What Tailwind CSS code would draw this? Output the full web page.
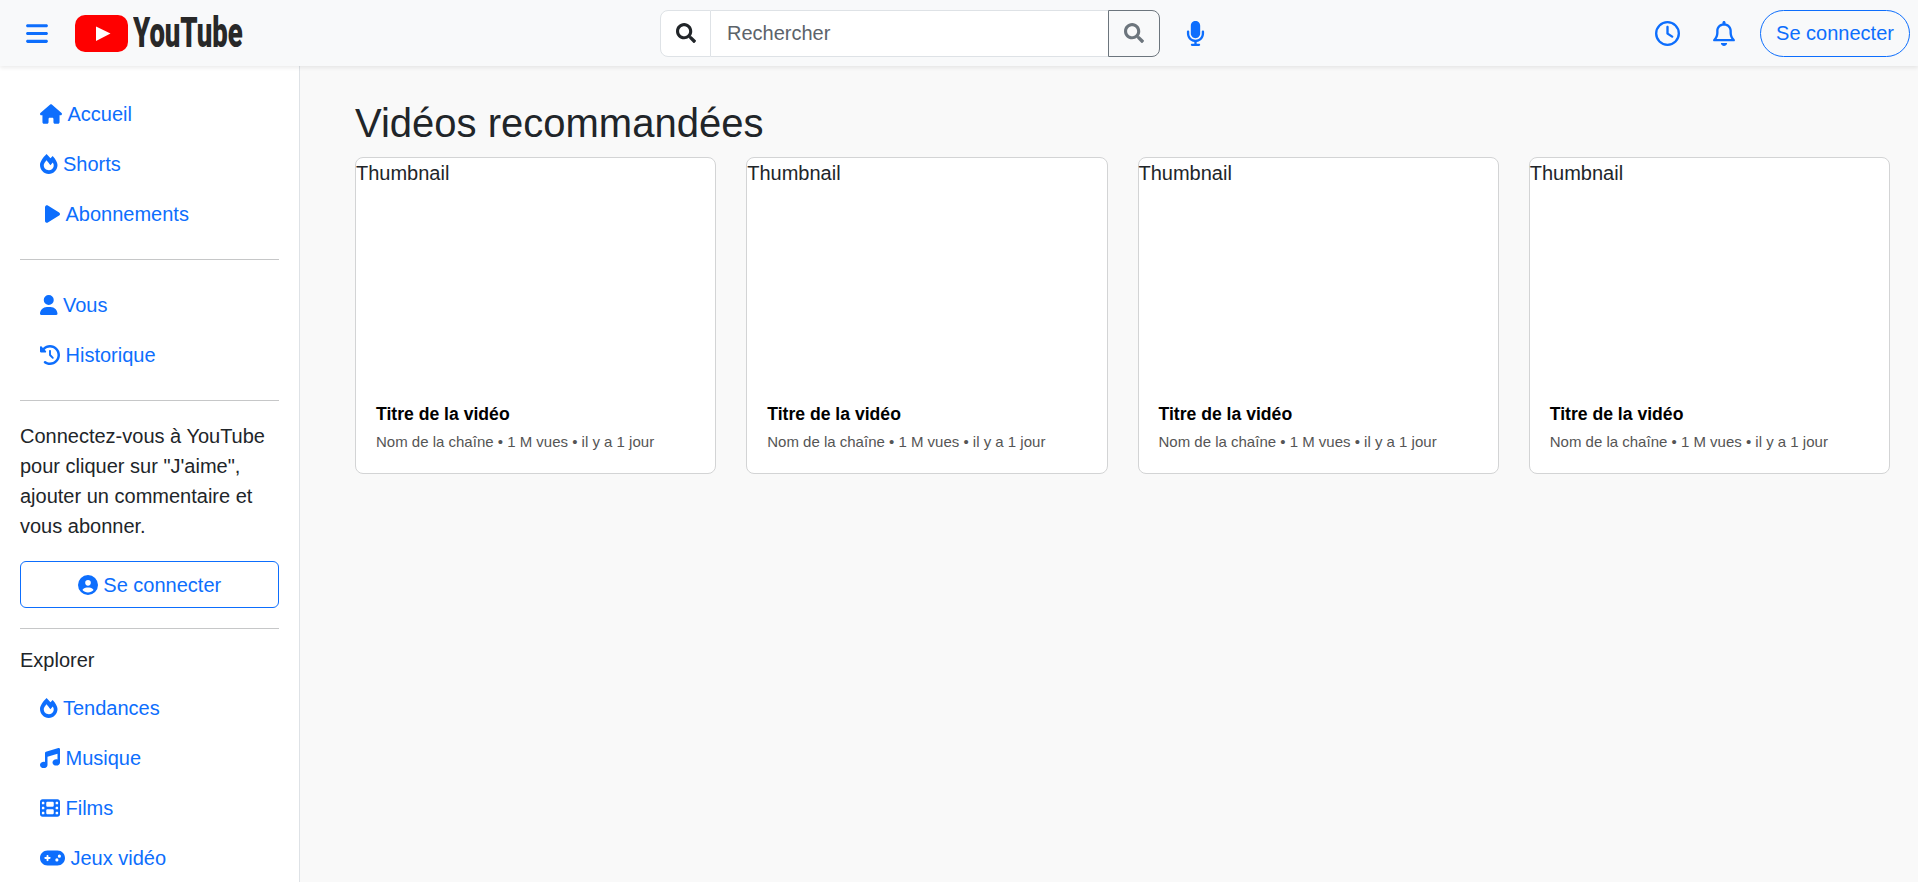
<!doctype html>
<html lang="fr">
<head>
<meta charset="utf-8">
<title>YouTube</title>
<script src="https://cdn.jsdelivr.net/npm/@tailwindcss/browser@4"></script>
</head>
<body class="h-screen overflow-hidden bg-[#f9f9f9] font-['Liberation_Sans',Arial,sans-serif] text-[20px] leading-[30px] text-[#212529]">
<header class="relative z-10 flex h-[66px] items-center bg-[#f8f9fa] shadow-[0_2px_4px_rgba(0,0,0,0.08)]">
  <div class="flex w-[660px] shrink-0 items-center pl-[26px]">
    <svg class="h-[25px] w-[22px] fill-[#0d6efd]" viewBox="0 0 448 512"><path d="M0 96C0 78.3 14.3 64 32 64H416c17.7 0 32 14.3 32 32s-14.3 32-32 32H32C14.3 128 0 113.7 0 96zM0 256c0-17.7 14.3-32 32-32H416c17.7 0 32 14.3 32 32s-14.3 32-32 32H32c-17.7 0-32-14.3-32-32zM448 416c0 17.7-14.3 32-32 32H32c-17.7 0-32-14.3-32-32s14.3-32 32-32H416c17.7 0 32 14.3 32 32z"/></svg>
    <svg class="ml-[27px] h-[37px] w-[53px]" viewBox="0 0 53 37"><rect width="53" height="37" rx="10" fill="#ff0000"/><path d="M21 11.5 L35.5 18.5 L21 26 Z" fill="#fff"/></svg>
    <svg class="ml-[5px] h-[50px] w-[115px]" viewBox="0 0 180 50" preserveAspectRatio="none"><text x="0" y="39.5" font-family="Roboto" font-weight="900" font-size="43" fill="#282828">YouTube</text></svg>
  </div>
  <div class="flex h-[47px] w-[500px] shrink-0">
    <div class="flex w-[51px] items-center justify-center rounded-l-[8px] border border-[#dee2e6] bg-white">
      <svg class="h-5 w-5 fill-[#212529]" viewBox="0 0 512 512"><path d="M505 442.7L405.3 343c-4.5-4.5-10.6-7-17-7H372c27.6-35.3 44-79.7 44-128C416 93.1 322.9 0 208 0S0 93.1 0 208s93.1 208 208 208c48.3 0 92.7-16.4 128-44v16.3c0 6.4 2.5 12.5 7 17l99.7 99.7c9.4 9.4 24.6 9.4 33.9 0l28.3-28.3c9.4-9.4 9.4-24.6.1-34zM208 336c-70.7 0-128-57.2-128-128 0-70.7 57.2-128 128-128 70.7 0 128 57.2 128 128 0 70.7-57.2 128-128 128z"/></svg>
    </div>
    <div class="flex flex-1 items-center border-y border-[#dee2e6] bg-white pl-[16px] text-[#5c636a]">Rechercher</div>
    <div class="flex w-[52px] items-center justify-center rounded-r-[8px] border border-[#6c757d] bg-[#f8f9fa]">
      <svg class="h-5 w-5 fill-[#6c757d]" viewBox="0 0 512 512"><path d="M505 442.7L405.3 343c-4.5-4.5-10.6-7-17-7H372c27.6-35.3 44-79.7 44-128C416 93.1 322.9 0 208 0S0 93.1 0 208s93.1 208 208 208c48.3 0 92.7-16.4 128-44v16.3c0 6.4 2.5 12.5 7 17l99.7 99.7c9.4 9.4 24.6 9.4 33.9 0l28.3-28.3c9.4-9.4 9.4-24.6.1-34zM208 336c-70.7 0-128-57.2-128-128 0-70.7 57.2-128 128-128 70.7 0 128 57.2 128 128 0 70.7-57.2 128-128 128z"/></svg>
    </div>
  </div>
  <svg class="ml-[26px] h-[25px] w-[19px] fill-[#0d6efd]" viewBox="0 0 384 512"><path d="M192 0C139 0 96 43 96 96V256c0 53 43 96 96 96s96-43 96-96V96c0-53-43-96-96-96zM64 216c0-13.3-10.7-24-24-24s-24 10.7-24 24v40c0 89.1 66.2 162.7 152 174.4V464H120c-13.3 0-24 10.7-24 24s10.7 24 24 24h72 72c13.3 0 24-10.7 24-24s-10.7-24-24-24H216V430.4c85.8-11.7 152-85.3 152-174.4V216c0-13.3-10.7-24-24-24s-24 10.7-24 24v40c0 70.7-57.3 128-128 128s-128-57.3-128-128V216z"/></svg>
  <div class="ml-auto flex items-center pr-2">
    <svg class="h-[25px] w-[25px] fill-[#0d6efd]" viewBox="0 0 512 512"><path d="M464 256A208 208 0 1 1 48 256a208 208 0 1 1 416 0zM0 256a256 256 0 1 0 512 0A256 256 0 1 0 0 256zM232 120V256c0 8 4 15.5 10.7 20l96 64c11 7.4 25.9 4.4 33.3-6.7s4.4-25.9-6.7-33.3L280 243.2V120c0-13.3-10.7-24-24-24s-24 10.7-24 24z"/></svg>
    <svg class="ml-[33px] h-[25px] w-[22px] fill-[#0d6efd]" viewBox="0 0 448 512"><path d="M224 0c-17.7 0-32 14.3-32 32V49.9C119.5 61.4 64 124.2 64 200v33.4c0 45.4-15.5 89.5-43.8 124.9L5.3 377c-5.8 7.2-6.9 17.1-2.9 25.4S14.8 416 24 416H424c9.2 0 17.6-5.3 21.6-13.6s2.9-18.2-2.9-25.4l-14.9-18.6C399.5 322.9 384 278.8 384 233.4V200c0-75.8-55.5-138.6-128-150.1V32c0-17.7-14.3-32-32-32zm0 96h8c57.4 0 104 46.6 104 104v33.4c0 47.9 13.9 94.6 39.7 134.6H72.3C98.1 328 112 281.3 112 233.4V200c0-57.4 46.6-104 104-104h8zm64 352H224 160c0 17 6.7 33.3 18.7 45.3s28.3 18.7 45.3 18.7s33.3-6.7 45.3-18.7s18.7-28.3 18.7-45.3z"/></svg>
    <div class="ml-[25px] flex h-[47px] w-[150px] items-center justify-center rounded-full border border-[#0d6efd] text-[#0d6efd]">Se connecter</div>
  </div>
</header>
<div class="flex h-[816px]">
  <aside class="h-full w-[300px] shrink-0 overflow-hidden border-r border-[#dee2e6] bg-white px-5 pt-[23px]">
    <nav class="flex flex-col text-[#0d6efd]">
      <a class="flex h-[50px] items-center gap-[5.5px] pl-5"><svg class="h-5 w-[22px] fill-current" viewBox="0 0 576 512"><path d="M575.8 255.5c0 18-15 32.1-32 32.1h-32l.7 160.2c0 2.7-.2 5.4-.5 8.1V472c0 22.1-17.9 40-40 40H456c-1.1 0-2.2 0-3.3-.1c-1.4 .1-2.8 .1-4.2 .1H416 392c-22.1 0-40-17.9-40-40V448 384c0-17.7-14.3-32-32-32H256c-17.7 0-32 14.3-32 32v64 24c0 22.1-17.9 40-40 40H160 128.1c-1.5 0-3-.1-4.5-.2c-1.2 .1-2.4 .2-3.6 .2H104c-22.1 0-40-17.9-40-40V360c0-.9 0-1.9 .1-2.8V287.6H32c-18 0-32-14-32-32.1c0-9 3-17 10-24L266.4 8c7-7 15-8 22-8s15 2 21 7L564.8 231.5c8 7 12 15 11 24z"/></svg>Accueil</a>
      <a class="flex h-[50px] items-center gap-[5.5px] pl-5"><svg class="h-5 w-[17.5px] fill-current" viewBox="0 0 448 512"><path d="M323.56 51.2c-20.8 19.3-39.58 39.59-56.22 59.97C240.08 73.62 206.28 35.53 168 0 69.74 91.17 0 209.96 0 281.6 0 408.85 100.29 512 224 512s224-103.15 224-230.4c0-53.27-51.98-163.14-124.44-230.4zm-19.47 340.65C282.43 407.01 255.72 416 226.86 416 154.71 416 96 368.26 96 290.75c0-38.61 24.31-72.63 72.79-130.75 6.93 7.98 98.83 125.34 98.83 125.34l58.63-66.88c4.14 6.85 7.91 13.55 11.27 19.97 27.35 52.19 15.81 118.97-33.43 153.42z"/></svg>Shorts</a>
      <a class="flex h-[50px] items-center gap-[5.5px] pl-[25px]"><svg class="h-5 w-[15px] fill-current" viewBox="0 0 384 512"><path d="M73 39c-14.8-9.1-33.4-9.4-48.5-.9S0 62.6 0 80V432c0 17.4 9.4 33.4 24.5 41.9s33.7 8.1 48.5-.9L361 297c14.3-8.7 23-24.2 23-41s-8.7-32.2-23-41L73 39z"/></svg>Abonnements</a>
    </nav>
    <div class="my-5 h-px bg-[#c6c7c8]"></div>
    <nav class="flex flex-col text-[#0d6efd]">
      <a class="flex h-[50px] items-center gap-[5.5px] pl-5"><svg class="h-5 w-[17.5px] fill-current" viewBox="0 0 448 512"><path d="M224 256A128 128 0 1 0 224 0a128 128 0 1 0 0 256zm-45.7 48C79.8 304 0 383.8 0 482.3C0 498.7 13.3 512 29.7 512H418.3c16.4 0 29.7-13.3 29.7-29.7C448 383.8 368.2 304 269.7 304H178.3z"/></svg>Vous</a>
      <a class="flex h-[50px] items-center gap-[5.5px] pl-5"><svg class="h-5 w-5 fill-current" viewBox="0 0 512 512"><path d="M75 75L41 41C25.9 25.9 0 36.6 0 57.9V168c0 13.3 10.7 24 24 24H134.1c21.4 0 32.1-25.9 17-41l-30.8-30.8C155 85.5 203 64 256 64c106 0 192 86 192 192s-86 192-192 192c-40.8 0-78.6-12.7-109.7-34.4c-14.5-10.1-34.4-6.6-44.6 7.9s-6.6 34.4 7.9 44.6C151.2 495 201.7 512 256 512c141.4 0 256-114.6 256-256S397.4 0 256 0C185.3 0 121.3 28.7 75 75zm181 53c-13.3 0-24 10.7-24 24V256c0 6.4 2.5 12.5 7 17l72 72c9.4 9.4 24.6 9.4 33.9 0s9.4-24.6 0-33.9l-65-65V152c0-13.3-10.7-24-24-24z"/></svg>Historique</a>
    </nav>
    <div class="my-5 h-px bg-[#c6c7c8]"></div>
    <p>Connectez-vous à YouTube pour cliquer sur "J'aime", ajouter un commentaire et vous abonner.</p>
    <div class="mt-5 flex h-[47px] items-center justify-center gap-[5.5px] rounded-[6px] border border-[#0d6efd] text-[#0d6efd]"><svg class="h-5 w-5 fill-current" viewBox="0 0 512 512"><path d="M399 384.2C376.9 345.8 335.4 320 288 320H224c-47.4 0-88.9 25.8-111 64.2c35.2 39.2 86.2 63.8 143 63.8s107.8-24.7 143-63.8zM0 256a256 256 0 1 1 512 0A256 256 0 1 1 0 256zm256 16a72 72 0 1 0 0-144 72 72 0 1 0 0 144z"/></svg>Se connecter</div>
    <div class="mt-5 mb-4 h-px bg-[#c6c7c8]"></div>
    <p class="mb-2">Explorer</p>
    <nav class="flex flex-col text-[#0d6efd]">
      <a class="flex h-[50px] items-center gap-[5.5px] pl-5"><svg class="h-5 w-[17.5px] fill-current" viewBox="0 0 448 512"><path d="M323.56 51.2c-20.8 19.3-39.58 39.59-56.22 59.97C240.08 73.62 206.28 35.53 168 0 69.74 91.17 0 209.96 0 281.6 0 408.85 100.29 512 224 512s224-103.15 224-230.4c0-53.27-51.98-163.14-124.44-230.4zm-19.47 340.65C282.43 407.01 255.72 416 226.86 416 154.71 416 96 368.26 96 290.75c0-38.61 24.31-72.63 72.79-130.75 6.93 7.98 98.83 125.34 98.83 125.34l58.63-66.88c4.14 6.85 7.91 13.55 11.27 19.97 27.35 52.19 15.81 118.97-33.43 153.42z"/></svg>Tendances</a>
      <a class="flex h-[50px] items-center gap-[5.5px] pl-5"><svg class="h-5 w-5 fill-current" viewBox="0 0 512 512"><path d="M499.1 6.3c8.1 6 12.9 15.6 12.9 25.7v72V368c0 44.2-43 80-96 80s-96-35.8-96-80s43-80 96-80c11.2 0 22 1.6 32 4.6V147L192 223.8V432c0 44.2-43 80-96 80s-96-35.8-96-80s43-80 96-80c11.2 0 22 1.6 32 4.6V200 128c0-14.1 9.3-26.6 22.8-30.7l320-96c9.7-2.9 20.2-1.1 28.3 4.9z"/></svg>Musique</a>
      <a class="flex h-[50px] items-center gap-[5.5px] pl-5"><svg class="h-5 w-5 fill-current" viewBox="0 0 512 512"><path d="M0 96C0 60.7 28.7 32 64 32H448c35.3 0 64 28.7 64 64V416c0 35.3-28.7 64-64 64H64c-35.3 0-64-28.7-64-64V96zM48 368v32c0 8.8 7.2 16 16 16H96c8.8 0 16-7.2 16-16V368c0-8.8-7.2-16-16-16H64c-8.8 0-16 7.2-16 16zm368-16c-8.8 0-16 7.2-16 16v32c0 8.8 7.2 16 16 16h32c8.8 0 16-7.2 16-16V368c0-8.8-7.2-16-16-16H416zM48 240v32c0 8.8 7.2 16 16 16H96c8.8 0 16-7.2 16-16V240c0-8.8-7.2-16-16-16H64c-8.8 0-16 7.2-16 16zm368-16c-8.8 0-16 7.2-16 16v32c0 8.8 7.2 16 16 16h32c8.8 0 16-7.2 16-16V240c0-8.8-7.2-16-16-16H416zM48 112v32c0 8.8 7.2 16 16 16H96c8.8 0 16-7.2 16-16V112c0-8.8-7.2-16-16-16H64c-8.8 0-16 7.2-16 16zM416 96c-8.8 0-16 7.2-16 16v32c0 8.8 7.2 16 16 16h32c8.8 0 16-7.2 16-16V112c0-8.8-7.2-16-16-16H416zM160 128v64c0 17.7 14.3 32 32 32H320c17.7 0 32-14.3 32-32V128c0-17.7-14.3-32-32-32H192c-17.7 0-32 14.3-32 32zm32 160c-17.7 0-32 14.3-32 32v64c0 17.7 14.3 32 32 32H320c17.7 0 32-14.3 32-32V320c0-17.7-14.3-32-32-32H192z"/></svg>Films</a>
      <a class="flex h-[50px] items-center gap-[5.5px] pl-5"><svg class="h-5 w-[25px] fill-current" viewBox="0 0 640 512"><path d="M192 64C86 64 0 150 0 256S86 448 192 448H448c106 0 192-86 192-192s-86-192-192-192H192zM496 168a40 40 0 1 1 0 80 40 40 0 1 1 0-80zM392 304a40 40 0 1 1 80 0 40 40 0 1 1 -80 0zM168 200c0-13.3 10.7-24 24-24s24 10.7 24 24v32h32c13.3 0 24 10.7 24 24s-10.7 24-24 24H216v32c0 13.3-10.7 24-24 24s-24-10.7-24-24V280H136c-13.3 0-24-10.7-24-24s10.7-24 24-24h32V200z"/></svg>Jeux vidéo</a>
    </nav>
  </aside>
  <main class="flex-1 pl-[55px] pr-[28px] pt-[33px]">
    <h2 class="mb-[10px] text-[40px] leading-[48px]">Vidéos recommandées</h2>
    <div class="grid grid-cols-4 gap-[30px]">
      <article class="h-[317px] rounded-[8px] border border-[#d3d4d5] bg-white">
        <div class="h-[200px] leading-[30px]">Thumbnail</div>
        <div class="px-[20px] pt-[43px]"><h3 class="text-[17.6px] leading-[26px] font-bold text-black">Titre de la vidéo</h3><p class="mt-[4px] text-[15px] leading-[22px] text-[#555]">Nom de la chaîne • 1 M vues • il y a 1 jour</p></div>
      </article>
      <article class="h-[317px] rounded-[8px] border border-[#d3d4d5] bg-white">
        <div class="h-[200px] leading-[30px]">Thumbnail</div>
        <div class="px-[20px] pt-[43px]"><h3 class="text-[17.6px] leading-[26px] font-bold text-black">Titre de la vidéo</h3><p class="mt-[4px] text-[15px] leading-[22px] text-[#555]">Nom de la chaîne • 1 M vues • il y a 1 jour</p></div>
      </article>
      <article class="h-[317px] rounded-[8px] border border-[#d3d4d5] bg-white">
        <div class="h-[200px] leading-[30px]">Thumbnail</div>
        <div class="px-[20px] pt-[43px]"><h3 class="text-[17.6px] leading-[26px] font-bold text-black">Titre de la vidéo</h3><p class="mt-[4px] text-[15px] leading-[22px] text-[#555]">Nom de la chaîne • 1 M vues • il y a 1 jour</p></div>
      </article>
      <article class="h-[317px] rounded-[8px] border border-[#d3d4d5] bg-white">
        <div class="h-[200px] leading-[30px]">Thumbnail</div>
        <div class="px-[20px] pt-[43px]"><h3 class="text-[17.6px] leading-[26px] font-bold text-black">Titre de la vidéo</h3><p class="mt-[4px] text-[15px] leading-[22px] text-[#555]">Nom de la chaîne • 1 M vues • il y a 1 jour</p></div>
      </article>
    </div>
  </main>
</div>
</body>
</html>
